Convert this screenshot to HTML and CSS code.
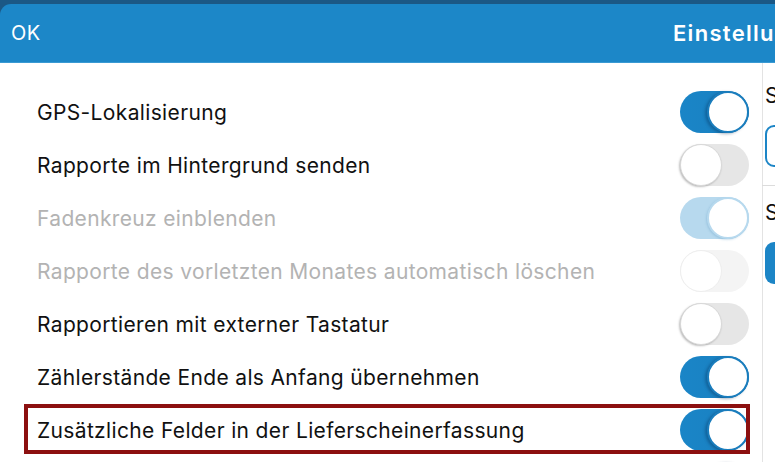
FILE: index.html
```html
<!DOCTYPE html>
<html lang="de">
<head>
<meta charset="utf-8">
<link rel="stylesheet" href="styles.css">
</head>
<body>
<div class="screen">
  <header class="bar">
    <span class="ok">OK</span>
    <span class="title">Einstellungen</span>
  </header>
  <div class="body">
    <div class="list">
      <div class="row"><span class="label">GPS-Lokalisierung</span><span class="toggle on"></span></div>
      <div class="row"><span class="label">Rapporte im Hintergrund senden</span><span class="toggle"></span></div>
      <div class="row disabled"><span class="label">Fadenkreuz einblenden</span><span class="toggle on"></span></div>
      <div class="row disabled"><span class="label">Rapporte des vorletzten Monates automatisch löschen</span><span class="toggle"></span></div>
      <div class="row"><span class="label">Rapportieren mit externer Tastatur</span><span class="toggle"></span></div>
      <div class="row"><span class="label">Zählerstände Ende als Anfang übernehmen</span><span class="toggle on"></span></div>
      <div class="row highlighted"><span class="label">Zusätzliche Felder in der Lieferscheinerfassung</span><span class="toggle on"></span><span class="mark"></span></div>
      <div class="row"><span class="label"></span><span class="toggle on"></span></div>
    </div>
    <aside class="side">
      <div class="s-label">S</div>
      <div class="s-box outline"></div>
      <div class="s-rule"></div>
      <div class="s-label second">S</div>
      <div class="s-box filled"></div>
    </aside>
  </div>
</div>
</body>
</html>
```

FILE: styles.css
```css
html, body {
  margin: 0;
  padding: 0;
  background: #ffffff;
  overflow: hidden;
}
.screen {
  width: 775px;
  height: 462px;
  background: #1b5885;
  padding-top: 4px;
  box-sizing: border-box;
  font-family: Inter, "Liberation Sans", Arial, sans-serif;
  overflow: hidden;
}
.bar {
  height: 58px;
  background: #1c87c8;
  border-bottom: 1px solid #3a9ad3;
  border-top-left-radius: 11px;
  display: flex;
  align-items: center;
  color: #ffffff;
  white-space: nowrap;
  overflow: hidden;
}
.ok {
  flex: none;
  font-size: 20px;
  padding-left: 11px;
  width: 662px;
  letter-spacing: 0.5px;
}
.title {
  flex: none;
  font-size: 22px;
  font-weight: 600;
  letter-spacing: 1.3px;
}
.body {
  display: flex;
  background: #ffffff;
  height: 400px;
}
.list {
  width: 762px;
  flex: none;
  padding-top: 22px;
  box-sizing: border-box;
}
.row {
  position: relative;
  height: 53px;
  display: flex;
  align-items: center;
  justify-content: space-between;
  padding: 0 13px 0 37px;
}
.label {
  font-size: 21px;
  letter-spacing: 0.35px;
  color: #111111;
  white-space: nowrap;
  padding-top: 1px;
}
.disabled .label {
  color: #b3b3b3;
}
.toggle {
  position: relative;
  width: 69px;
  height: 42px;
  border-radius: 21px;
  background: #e6e6e6;
  box-sizing: border-box;
  flex: none;
}
.toggle::after {
  content: "";
  position: absolute;
  left: 0;
  top: 0;
  width: 40px;
  height: 40px;
  border-radius: 50%;
  background: #ffffff;
  box-shadow: -1px 1px 2px rgba(0,0,0,0.25);
  border: 1px solid #d9d9d9;
}
.toggle.on {
  background: linear-gradient(90deg, #1a85c7, #1a80c0);
}
.toggle.on::after {
  left: auto;
  right: 0;
  border: 2px solid #1a7dbd;
  width: 38px;
  height: 38px;
  box-shadow: -2px 1px 3px rgba(0,40,80,0.35);
}
.disabled .toggle {
  background: #f4f4f4;
}
.disabled .toggle::after {
  border-color: #eeeeee;
  box-shadow: none;
}
.disabled .toggle.on {
  background: #b7d9ee;
}
.disabled .toggle.on::after {
  border-color: #b7d9ee;
  box-shadow: -1px 1px 2px rgba(100,160,200,0.3);
}
.mark {
  position: absolute;
  left: 24px;
  top: 1px;
  width: 726px;
  height: 50px;
  border: 4px solid #8c1010;
  box-sizing: border-box;
  pointer-events: none;
}
.side {
  flex: 1;
  border-left: 1px solid #e3e3e3;
  padding-top: 20px;
  padding-left: 2px;
}
.s-label {
  font-size: 21px;
  color: #111111;
  height: 28px;
}
.s-box {
  margin-top: 14px;
  height: 42px;
  border-radius: 9px;
  box-sizing: border-box;
  width: 40px;
}
.s-box.outline {
  border: 2px solid #1c85c6;
}
.s-box.filled {
  background: #1c85c6;
  margin-top: 14px;
}
.s-rule {
  margin: 18px 0 0 -3px;
  height: 1px;
  background: #dcdcdc;
}
.s-label.second {
  margin-top: 14px;
}
```
